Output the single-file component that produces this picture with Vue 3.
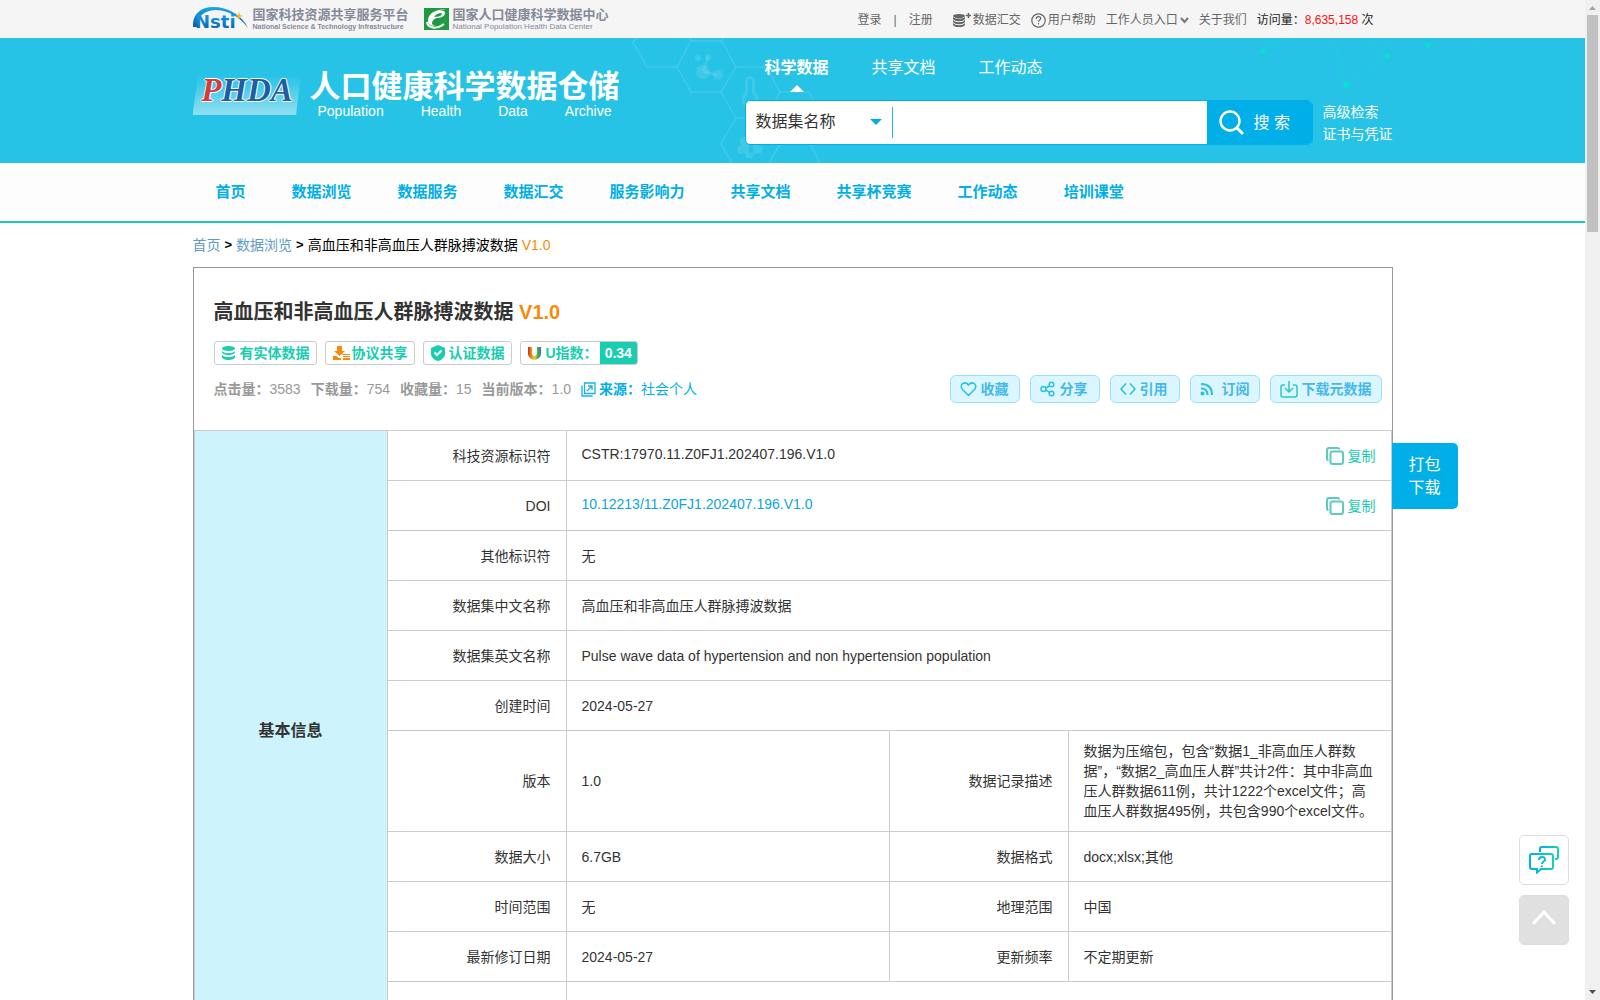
<script setup>
import { ref } from 'vue'

const keyword = ref('')
const searchField = ref('name')
const activeTab = ref('科学数据')

const tabs = ['科学数据', '共享文档', '工作动态']
const navItems = ['首页', '数据浏览', '数据服务', '数据汇交', '服务影响力', '共享文档', '共享杯竞赛', '工作动态', '培训课堂']

const stats = [
  { label: '点击量：', value: '3583' },
  { label: '下载量：', value: '754' },
  { label: '收藏量：', value: '15' },
  { label: '当前版本：', value: '1.0' }
]

// One entry per table row, a row holds one or two label / value pairs
const rows = [
  [{ label: '科技资源标识符', value: 'CSTR:17970.11.Z0FJ1.202407.196.V1.0', copy: true }],
  [{ label: 'DOI', value: '10.12213/11.Z0FJ1.202407.196.V1.0', link: true, copy: true }],
  [{ label: '其他标识符', value: '无' }],
  [{ label: '数据集中文名称', value: '高血压和非高血压人群脉搏波数据' }],
  [{ label: '数据集英文名称', value: 'Pulse wave data of hypertension and non hypertension population' }],
  [{ label: '创建时间', value: '2024-05-27' }],
  [
    { label: '版本', value: '1.0' },
    {
      label: '数据记录描述',
      value: '数据为压缩包，包含“数据1_非高血压人群数据”，“数据2_高血压人群”共计2件：其中非高血压人群数据611例，共计1222个excel文件；高血压人群数据495例，共包含990个excel文件。'
    }
  ],
  [{ label: '数据大小', value: '6.7GB' }, { label: '数据格式', value: 'docx;xlsx;其他' }],
  [{ label: '时间范围', value: '无' }, { label: '地理范围', value: '中国' }],
  [{ label: '最新修订日期', value: '2024-05-27' }, { label: '更新频率', value: '不定期更新' }],
  [{ label: '', value: '' }]
]

const copyText = (text) => {
  navigator.clipboard?.writeText(text)
}
</script>

<template>
  <div class="page">
    <div class="content">
      <div class="topbar">
        <div class="container topbar-inner">
          <a href="#" class="partner">
            <svg width="56" height="28" viewBox="0 -2 56 28">
              <defs>
                <linearGradient id="nsti" x1="0" y1="0" x2="0" y2="1">
                  <stop offset="0" stop-color="#18a9e6" />
                  <stop offset="1" stop-color="#0a57ac" />
                </linearGradient>
              </defs>
              <path d="M0 20C-1 7 8 0 20 0c15 0 29 8 35 21-8-11-20-18-33-18C11 4 5 8 4 20z" fill="url(#nsti)" />
              <text x="2" y="21" class="nsti-word" fill="url(#nsti)">Nsti</text>
              <path d="M46 5l1 3 3 1-3 1-1 3-1-3-3-1 3-1z" fill="#fdb813" />
            </svg>
            <span class="partner-text">
              <span class="partner-cn">国家科技资源共享服务平台</span>
              <span class="partner-en nsti-en">National Science &amp; Technology Infrastructure</span>
            </span>
          </a>
          <a href="#" class="partner">
            <svg width="25" height="22" viewBox="0 0 25 22">
              <rect width="25" height="22" fill="#1e9a41" />
              <path d="M25 2C20 1 11 1 6 7c-4 5-2 11 4 11 5 0 10-3 12-7-4 7-14 9-14 4 0-2 2-4 4-5 4 0 9-1 9-5 0-4-8-3-12 1 4-4 11-5 16-4z" fill="#fff" />
              <path d="M10 9c2-3 5-4 7-4s1 4-7 4z" fill="#1e9a41" />
              <path d="M3 14c1 6 9 8 17 2" fill="none" stroke="#fff" stroke-width="2" />
            </svg>
            <span class="partner-text">
              <span class="partner-cn">国家人口健康科学数据中心</span>
              <span class="partner-en">National Population Health Data Center</span>
            </span>
          </a>
          <div class="top-links">
            <a href="#">登录</a>
            <span class="split">|</span>
            <a href="#" class="register">注册</a>
            <a href="#">
              <svg width="18" height="14" viewBox="0 0 18 14" fill="#666">
                <ellipse cx="6" cy="3" rx="6" ry="2" />
                <path d="M0 4c2 2 10 2 12 0v2c-2 3-10 3-12 0zM0 7c2 3 10 3 12 0v2c-2 3-10 3-12 0zM0 10c2 3 10 3 12 0v2c-2 3-10 3-12 0z" />
                <path d="M13 2h2V0h1v2h2v1h-2v2h-1V3h-2z" stroke="#666" stroke-width=".5" />
              </svg>
              数据汇交
            </a>
            <a href="#">
              <svg width="15" height="15" viewBox="0 0 15 15" fill="none" stroke="#666" stroke-width="1.2">
                <circle cx="7.5" cy="7.5" r="6.7" />
                <path d="M5.3 6c0-3 4.400-3 4.400-.5 0 1.500-2.200 1.500-2.200 3.200M7.500 10v1.500" />
              </svg>
              用户帮助
            </a>
            <a href="#">
              工作人员入口
              <svg width="9" height="7" viewBox="0 0 9 7" fill="none" stroke="#777" stroke-width="2"><path d="M1 1l3.500 4L8 1" /></svg>
            </a>
            <a href="#">关于我们</a>
            <span class="visits">访问量：<b>8,635,158</b> 次</span>
          </div>
        </div>
      </div>

      <header class="banner">
        <div class="container banner-inner">
          <svg class="decor-hex" width="210" height="125" viewBox="0 0 210 125" fill="none" stroke="#fff" stroke-opacity=".12" stroke-width="1.500">
            <path d="M17 0l-4 4 14 25h30l14-26h31l14 26-15 25H71L57 29M71 3l-1-3M102 3l1-3M116 29h30l14 25-14 26h-30l-15-26M116 80l-15 26 11 19M146 80l14 26-11 19M160 54h29l12 22-11 24M190 106l10 19M160 106h28" />
            <g fill="#fff" fill-opacity=".1" stroke="none">
              <circle cx="83" cy="34" r="7" /><circle cx="98" cy="37" r="5" /><circle cx="88" cy="19" r="3" /><circle cx="78" cy="20" r="3" />
              <path d="M87 18l2 1-4 14h-3zM84 32l14 4-1 2-14-3z" />
              <path d="M125 44c0-8 10-8 10 0v10c7 7 3 16-5 16s-12-9-5-16zm3 0v12c-6 6-3 10 2 10s8-5 2-10V44c0-4-4-4-4 0z" fill-rule="evenodd" />
              <path d="M126 97l5 4 5-4 4 6-2 4 5 2-2 7-7-1-2 5h-6l-1-5-7 1-1-7 4-2-2-5zM129 105v10h4v-10z" fill-rule="evenodd" />
            </g>
          </svg>
          <a href="#" class="brand">
            <span class="brand-mark">PHDA</span>
            <span class="brand-text">
              <span class="brand-cn">人口健康科学数据仓储</span>
              <span class="brand-en"><span>Population</span><span>Health</span><span>Data</span><span>Archive</span></span>
            </span>
          </a>
          <div class="search-area">
            <div class="tabs">
              <button
                v-for="tab in tabs"
                :key="tab"
                type="button"
                class="tab"
                :class="{ active: tab === activeTab }"
                @click="activeTab = tab"
              >{{ tab }}</button>
            </div>
            <div class="search-row">
              <form class="search-form" @submit.prevent>
                <label class="field-select">
                  <select v-model="searchField" aria-label="检索字段">
                    <option value="name">数据集名称</option>
                  </select>
                  <svg width="12" height="6" viewBox="0 0 12 6"><path d="M0 0h12L6 6z" fill="#00aee8" /></svg>
                </label>
                <input v-model="keyword" type="text" class="keyword" aria-label="关键词" />
                <button type="submit" class="btn-search">
                  <svg width="25" height="25" viewBox="0 0 25 25" fill="none" stroke="#fff" stroke-width="2.400">
                    <circle cx="11" cy="11" r="9.500" /><path d="M18 18l5 5" stroke-width="3" stroke-linecap="round" />
                  </svg>
                  搜 索
                </button>
              </form>
              <div class="search-links">
                <a href="#">高级检索</a>
                <a href="#">证书与凭证</a>
              </div>
            </div>
          </div>
          <svg class="decor-net" width="240" height="60" viewBox="0 0 240 60">
            <g stroke="#10dcc8" stroke-opacity=".35" stroke-width="1.500">
              <path d="M13 13L34 0M96 47L84 0M96 47l41-29M137 18L113 0M137 18l7-18" fill="none" />
            </g>
            <g fill="#08e3cb">
              <circle cx="13" cy="13" r="2.500" /><circle cx="96" cy="47" r="3" /><circle cx="137" cy="18" r="2.500" />
              <circle cx="178" cy="7" r="3" opacity=".7" /><circle cx="224" cy="8" r="4" opacity=".12" />
            </g>
          </svg>
        </div>
      </header>

      <nav class="nav">
        <div class="container nav-inner">
          <a v-for="item in navItems" :key="item" href="#">{{ item }}</a>
        </div>
      </nav>

      <main class="container">
        <div class="breadcrumb">
          <a href="#">首页</a><b>&gt;</b><a href="#">数据浏览</a><b>&gt;</b>
          <span>高血压和非高血压人群脉搏波数据</span>
          <em>V1.0</em>
        </div>

        <section class="dataset">
          <div class="dataset-head">
            <h1>高血压和非高血压人群脉搏波数据 <em>V1.0</em></h1>
            <div class="badges">
              <span class="badge">
                <svg class="wide-gap" width="13" height="14" viewBox="0 0 13 14" fill="#18cdb0">
                  <ellipse cx="6.500" cy="2.500" rx="6.500" ry="2.500" />
                  <path d="M0 5c3 3 10 3 13 0v1c0 4-13 4-13 0zM0 9c3 3 10 3 13 0v2c0 4-13 4-13 0z" />
                </svg>
                有实体数据
              </span>
              <span class="badge">
                <svg width="17" height="14" viewBox="0 0 17 14" fill="#f78b09">
                  <path d="M4 0h5v5h3L6.500 10 1 5h3zM0 10h3l3 2h2v2H0zM9 8h8v1H9zM10 10h7v1h-7zM10 12h7v2h-7z" />
                </svg>
                协议共享
              </span>
              <span class="badge">
                <svg class="mid-gap" width="14" height="16" viewBox="0 0 14 16">
                  <path d="M7 0l7 3v6c0 3-3 6-7 7-4-1-7-4-7-7V3z" fill="#18cdb0" />
                  <path d="M3.500 7.500L6 10l4.500-4.500" fill="none" stroke="#fff" stroke-width="2" />
                </svg>
                认证数据
              </span>
              <span class="badge badge-index">
                <svg class="wide-gap" width="13" height="13" viewBox="0 0 13 13">
                  <defs>
                    <linearGradient id="uIndex">
                      <stop offset="0" stop-color="#c4262e" />
                      <stop offset=".25" stop-color="#f78b09" />
                      <stop offset=".5" stop-color="#f3d12a" />
                      <stop offset=".75" stop-color="#43b649" />
                      <stop offset="1" stop-color="#3b63c9" />
                    </linearGradient>
                  </defs>
                  <path d="M0 0h4v6c0 4 5 4 5 0V0h4v6c0 9-13 9-13 0z" fill="url(#uIndex)" />
                </svg>
                U指数：
                <span class="index-value">0.34</span>
              </span>
            </div>
            <div class="meta">
              <div class="stats">
                <span v-for="item in stats" :key="item.label"><b>{{ item.label }}</b>{{ item.value }}</span>
                <span class="source">
                  <svg width="15" height="15" viewBox="0 0 15 15" fill="none" stroke="#1aaeea" stroke-width="1.300">
                    <path d="M3.500 1h10.500v10.500H3.500zM1 3.500V14h10.500M6 9l5-5M7 4h4v4" />
                  </svg>
                  <b>来源：</b><a href="#">社会个人</a>
                </span>
              </div>
              <div class="actions">
                <button type="button">
                  <svg width="17" height="16" viewBox="0 0 17 16"><path d="M8.500 14.500L2.500 8.500C-1.500 3.500 5-.5 8.500 4 12-.5 18.500 3.500 14.500 8.500z" /></svg>
                  收藏
                </button>
                <button type="button">
                  <svg width="16" height="16" viewBox="0 0 16 16">
                    <circle cx="3.500" cy="8" r="2.500" /><circle cx="11.500" cy="3.500" r="2.300" /><circle cx="11.500" cy="12.500" r="2.300" />
                    <path d="M6 7l3.500-2M6 9l3.500 2.300" />
                  </svg>
                  分享
                </button>
                <button type="button">
                  <svg width="16" height="14" viewBox="0 0 16 14"><path d="M6 1.500L1 7l5 5.500M10 1.500L15 7l-5 5.500" /></svg>
                  引用
                </button>
                <button type="button" class="loose">
                  <svg class="rss" width="14" height="14" viewBox="0 0 14 14">
                    <path d="M1 2c7 0 11 4 11 11M1 6.500c4 0 6.500 2.500 6.500 6.500" /><circle cx="2.500" cy="11.500" r="1" />
                  </svg>
                  订阅
                </button>
                <button type="button" class="download">
                  <svg width="18" height="17" viewBox="0 0 18 17"><path d="M5 4H3Q1 4 1 6v8q0 2 2 2h12q2 0 2-2V6q0-2-2-2h-2M9 0v11M5 7l4 4 4-4" /></svg>
                  下载元数据
                </button>
              </div>
            </div>
          </div>

          <table>
            <colgroup>
              <col class="col-group" />
              <col class="col-label" />
              <col />
              <col class="col-label" />
              <col />
            </colgroup>
            <tbody>
              <tr v-for="(row, index) in rows" :key="index">
                <th v-if="index === 0" class="group" scope="rowgroup" :rowspan="rows.length">基本信息</th>
                <template v-for="cell in row" :key="cell.label">
                  <th class="label" scope="row">{{ cell.label }}</th>
                  <td :colspan="row.length === 1 ? 3 : 1">
                    <div v-if="cell.copy" class="copy-cell">
                      <a v-if="cell.link" href="#">{{ cell.value }}</a>
                      <span v-else>{{ cell.value }}</span>
                      <button type="button" class="btn-copy" @click="copyText(cell.value)">
                        <svg width="18" height="18" viewBox="0 0 18 18" fill="none" stroke="#5fcbbd" stroke-width="2">
                          <rect x="4.500" y="4.500" width="12.500" height="12.500" rx="2" />
                          <path d="M2.500 13.500Q1 13 1 11.500V3q0-2 2-2h8.500Q13 1 13.500 2.500" />
                        </svg>
                        复制
                      </button>
                    </div>
                    <template v-else>{{ cell.value }}</template>
                  </td>
                </template>
              </tr>
            </tbody>
          </table>
          <button type="button" class="btn-pack">打包<br />下载</button>
        </section>
      </main>

      <div class="float-tools">
        <button type="button" class="tool" aria-label="在线咨询">
          <svg width="30" height="28" viewBox="0 0 30 28" fill="none" stroke-width="2">
            <defs>
              <linearGradient id="chat">
                <stop offset="0" stop-color="#00aee8" />
                <stop offset="1" stop-color="#1ad0b4" />
              </linearGradient>
            </defs>
            <path d="M11 6V3q0-2 2-2h14q2 0 2 2v8q0 2-2 2h-1" stroke="url(#chat)" />
            <path d="M3 8h19q2 0 2 2v11q0 2-2 2H12l-4 3.500V23H3q-2 0-2-2V10q0-2 2-2z" stroke="url(#chat)" />
            <path d="M10 14c0-4 6-4 6-.5 0 2-3 2-3 4.500M13 19.500V21" stroke="#0cbcd4" />
          </svg>
        </button>
        <button type="button" class="tool to-top" aria-label="返回顶部">
          <svg width="24" height="15" viewBox="0 0 24 15" fill="none" stroke="#fff" stroke-width="3" stroke-linecap="round"><path d="M2 13L12 2l10 11" /></svg>
        </button>
      </div>
    </div>

    <div class="scrollbar">
      <svg width="7" height="4" viewBox="0 0 7 4"><path d="M0 4h7L3.500 0z" fill="#a3a3a3" /></svg>
      <div class="thumb"></div>
      <svg width="7" height="4" viewBox="0 0 7 4"><path d="M0 0h7L3.500 4z" fill="#505050" /></svg>
    </div>
  </div>
</template>

<style>
body {
  margin: 0;
  background: #fff;
}
</style>

<style scoped>
.page {
  display: flex;
  height: 100vh;
  overflow: hidden;
  font-family: "Liberation Sans", "Noto Sans CJK SC", sans-serif;
  font-size: 14px;
  line-height: 20px;
  color: #333;
}

.page * {
  box-sizing: border-box;
}

.content {
  flex: 1;
  min-width: 0;
}

.container {
  max-width: 1200px;
  margin: 0 auto;
}

a {
  color: inherit;
  text-decoration: none;
}

em {
  font-style: normal;
  color: #f78b09;
}

button {
  font-family: inherit;
  cursor: pointer;
}

svg {
  flex: none;
}

/* top bar */
.topbar {
  background: #f5f5f5;
}

.topbar-inner {
  display: flex;
  align-items: center;
  height: 38px;
}

.partner {
  display: flex;
  align-items: center;
  gap: 4px;
  margin-right: 15px;
  color: #85899a;
}

.nsti-word {
  font-family: "DejaVu Sans", sans-serif;
  font-size: 18px;
  font-weight: bold;
}

.partner-text {
  display: flex;
  flex-direction: column;
}

.partner-cn {
  font-size: 13px;
  font-weight: bold;
  line-height: 14px;
}

.partner-en {
  font-size: 8px;
  line-height: 9px;
}

.nsti-en {
  font-size: 7px;
  font-weight: bold;
}

.top-links {
  display: flex;
  align-items: center;
  gap: 10px;
  margin-left: auto;
  padding: 2px 19px 0 0;
  font-size: 12px;
  color: #666;
  white-space: nowrap;
}

.top-links a {
  display: flex;
  align-items: center;
  gap: 2px;
}

.split {
  padding: 0 2px;
}

.register {
  margin-right: 10px;
}

.visits {
  color: #222;
}

.visits b {
  font-weight: normal;
  color: #f11;
}

/* banner */
.banner {
  background: #27c3e6;
  color: #fff;
}

.banner-inner {
  position: relative;
  display: flex;
  justify-content: space-between;
  height: 125px;
}

.decor-hex,
.decor-net {
  position: absolute;
  top: 0;
  left: 427px;
  pointer-events: none;
}

.decor-net {
  left: 1057px;
}

.brand {
  display: flex;
  align-items: flex-start;
  gap: 8px;
  padding-top: 31px;
}

.brand-mark {
  width: 109px;
  height: 46px;
  clip-path: polygon(6% 0, 100% 0, 95% 100%, 0 100%);
  background: linear-gradient(#27c3e6 15%, #93dff0);
  font-family: "Liberation Serif", serif;
  font-size: 33px;
  font-style: italic;
  font-weight: bold;
  line-height: 42px;
  text-align: center;
  color: #1e5fa3;
  text-shadow: 1px 0 #fff, -1px 0 #fff, 0 1px #fff, 0 -1px #fff;
}

.brand-mark::first-letter {
  color: #d33c3e;
}

.brand-text {
  display: flex;
  flex-direction: column;
}

.brand-cn {
  font-size: 31px;
  font-weight: bold;
  line-height: 35px;
}

.brand-en {
  display: flex;
  justify-content: space-between;
  padding: 0 8px;
  font-size: 14px;
  line-height: 14px;
}

.search-area {
  position: relative;
  display: flex;
  flex-direction: column;
}

.tabs {
  display: flex;
  gap: 43px;
  height: 62px;
  padding: 18px 0 0 20px;
}

.tab {
  display: flex;
  flex-direction: column;
  align-items: center;
  gap: 5px;
  padding: 0;
  border: none;
  background: none;
  font-size: 16px;
  line-height: 24px;
  color: #fff;
}

.tab.active {
  font-weight: bold;
}

.tab.active::after {
  content: '';
  border: 7px solid transparent;
  border-top: none;
  border-bottom-color: #fff;
}

.search-row {
  display: flex;
  align-items: center;
  gap: 10px;
}

.search-form {
  display: flex;
  width: 568px;
  height: 45px;
  border: 1px solid #00aee8;
  border-radius: 5px;
  background: #fff;
  overflow: hidden;
}

.field-select {
  position: relative;
  width: 147px;
  margin: 6px 0;
  border-right: 1px solid #27b8de;
}

.field-select select {
  width: 100%;
  height: 28px;
  padding: 0 10px;
  border: none;
  outline: none;
  appearance: none;
  background: #fff;
  font-family: inherit;
  font-size: 16px;
  color: #333;
}

.field-select svg {
  position: absolute;
  top: 12px;
  right: 10px;
  pointer-events: none;
}

.keyword {
  flex: 1;
  min-width: 0;
  padding: 0 10px;
  border: none;
  outline: none;
  font-size: 16px;
}

.btn-search {
  display: flex;
  align-items: center;
  gap: 10px;
  width: 105px;
  padding: 0 12px;
  border: none;
  background: #00aee8;
  font-size: 16px;
  line-height: 22px;
  color: #fff;
  white-space: nowrap;
}

.search-links {
  display: flex;
  flex-direction: column;
  line-height: 22px;
}

/* nav */
.nav {
  background: #fdfdfd;
  border-bottom: 2px solid #1ccdb4;
}

.nav-inner {
  display: flex;
}

.nav a {
  padding: 0 23px;
  font-size: 15px;
  font-weight: bold;
  line-height: 58px;
  color: #00aee8;
}

.breadcrumb {
  display: flex;
  gap: 4px;
  padding: 11px 0;
  line-height: 22px;
  color: #000;
}

.breadcrumb a {
  color: #5e9bc8;
}

.breadcrumb b {
  font-size: 13px;
}

/* dataset box */
.dataset {
  position: relative;
  border: 1px solid #999;
}

.dataset-head {
  padding: 30px 10px 27px 20px;
}

h1 {
  margin: 0;
  font-size: 20px;
  line-height: 28px;
}

.badges {
  display: flex;
  gap: 8px;
  margin-top: 15px;
}

.badge {
  display: flex;
  align-items: center;
  gap: 2px;
  height: 24px;
  padding: 0 6px 0 7px;
  border: 1px solid #ccc;
  border-radius: 3px;
  font-weight: bold;
  color: #18cdb0;
}

.wide-gap {
  margin-right: 3px;
}

.mid-gap {
  margin-right: 2px;
}

.badge-index {
  padding-right: 0;
}

.index-value {
  padding: 0 5px;
  border-radius: 0 2px 2px 0;
  background: #18cdb0;
  line-height: 22px;
  color: #fff;
}

.meta {
  display: flex;
  justify-content: space-between;
  align-items: center;
  margin-top: 10px;
}

.stats {
  display: flex;
  gap: 10px;
  color: #999;
}

.source {
  display: flex;
  align-items: center;
  color: #00aee8;
}

.source svg {
  margin-right: 3px;
}

.actions {
  display: flex;
  gap: 10px;
}

.actions button {
  display: flex;
  align-items: center;
  gap: 4px;
  min-width: 70px;
  height: 28px;
  padding: 0 9px;
  border: 1px solid #93e4fb;
  border-radius: 6px;
  background: #dbf6ff;
  font-size: 14px;
  font-weight: bold;
  line-height: 20px;
  color: #46b8e9;
}

.actions .loose {
  gap: 8px;
}

.actions svg {
  fill: none;
  stroke: #2bc1df;
  stroke-width: 1.5;
}

.actions .rss {
  stroke-width: 2.2;
}

.actions .download svg {
  stroke: #2cc8c6;
}

/* detail table */
table {
  width: 100%;
  table-layout: fixed;
  border-collapse: collapse;
}

.col-group {
  width: 193px;
}

.col-label {
  width: 179px;
}

tr {
  height: 50px;
}

th,
td {
  padding: 10px 15px;
  border: 1px solid #ccc;
}

td {
  text-align: left;
}

.label {
  font-weight: normal;
  text-align: right;
}

.group {
  background: #cdf4fd;
  font-size: 16px;
  text-align: center;
}

.copy-cell {
  display: flex;
  justify-content: space-between;
  align-items: flex-start;
  line-height: 16px;
}

.copy-cell a {
  color: #0ba5dc;
}

.btn-copy {
  display: flex;
  align-items: center;
  gap: 4px;
  padding: 0;
  border: none;
  background: none;
  font-size: 14px;
  line-height: 20px;
  color: #18cdb0;
}

.btn-pack {
  position: absolute;
  top: 175px;
  left: 100%;
  width: 66px;
  height: 66px;
  padding: 0;
  border: none;
  border-radius: 0 5px 5px 0;
  background: #00aee8;
  font-size: 16px;
  line-height: 23px;
  color: #fff;
}

/* floating tools */
.float-tools {
  position: fixed;
  right: 31px;
  bottom: 55px;
  display: flex;
  flex-direction: column;
  gap: 10px;
}

.tool {
  display: flex;
  align-items: center;
  justify-content: center;
  width: 50px;
  height: 50px;
  padding: 0;
  border: 1px solid #ddd;
  border-radius: 5px;
  background: #fff;
}

.to-top {
  padding-bottom: 6px;
  background: #e0e0e0;
}

/* scrollbar */
.scrollbar {
  display: flex;
  flex-direction: column;
  align-items: center;
  width: 15px;
  padding: 6px 0;
  background: #f0f0f0;
}

.thumb {
  width: 11px;
  height: 22%;
  margin: 5px 0 auto;
  background: #c1c1c1;
}
</style>
